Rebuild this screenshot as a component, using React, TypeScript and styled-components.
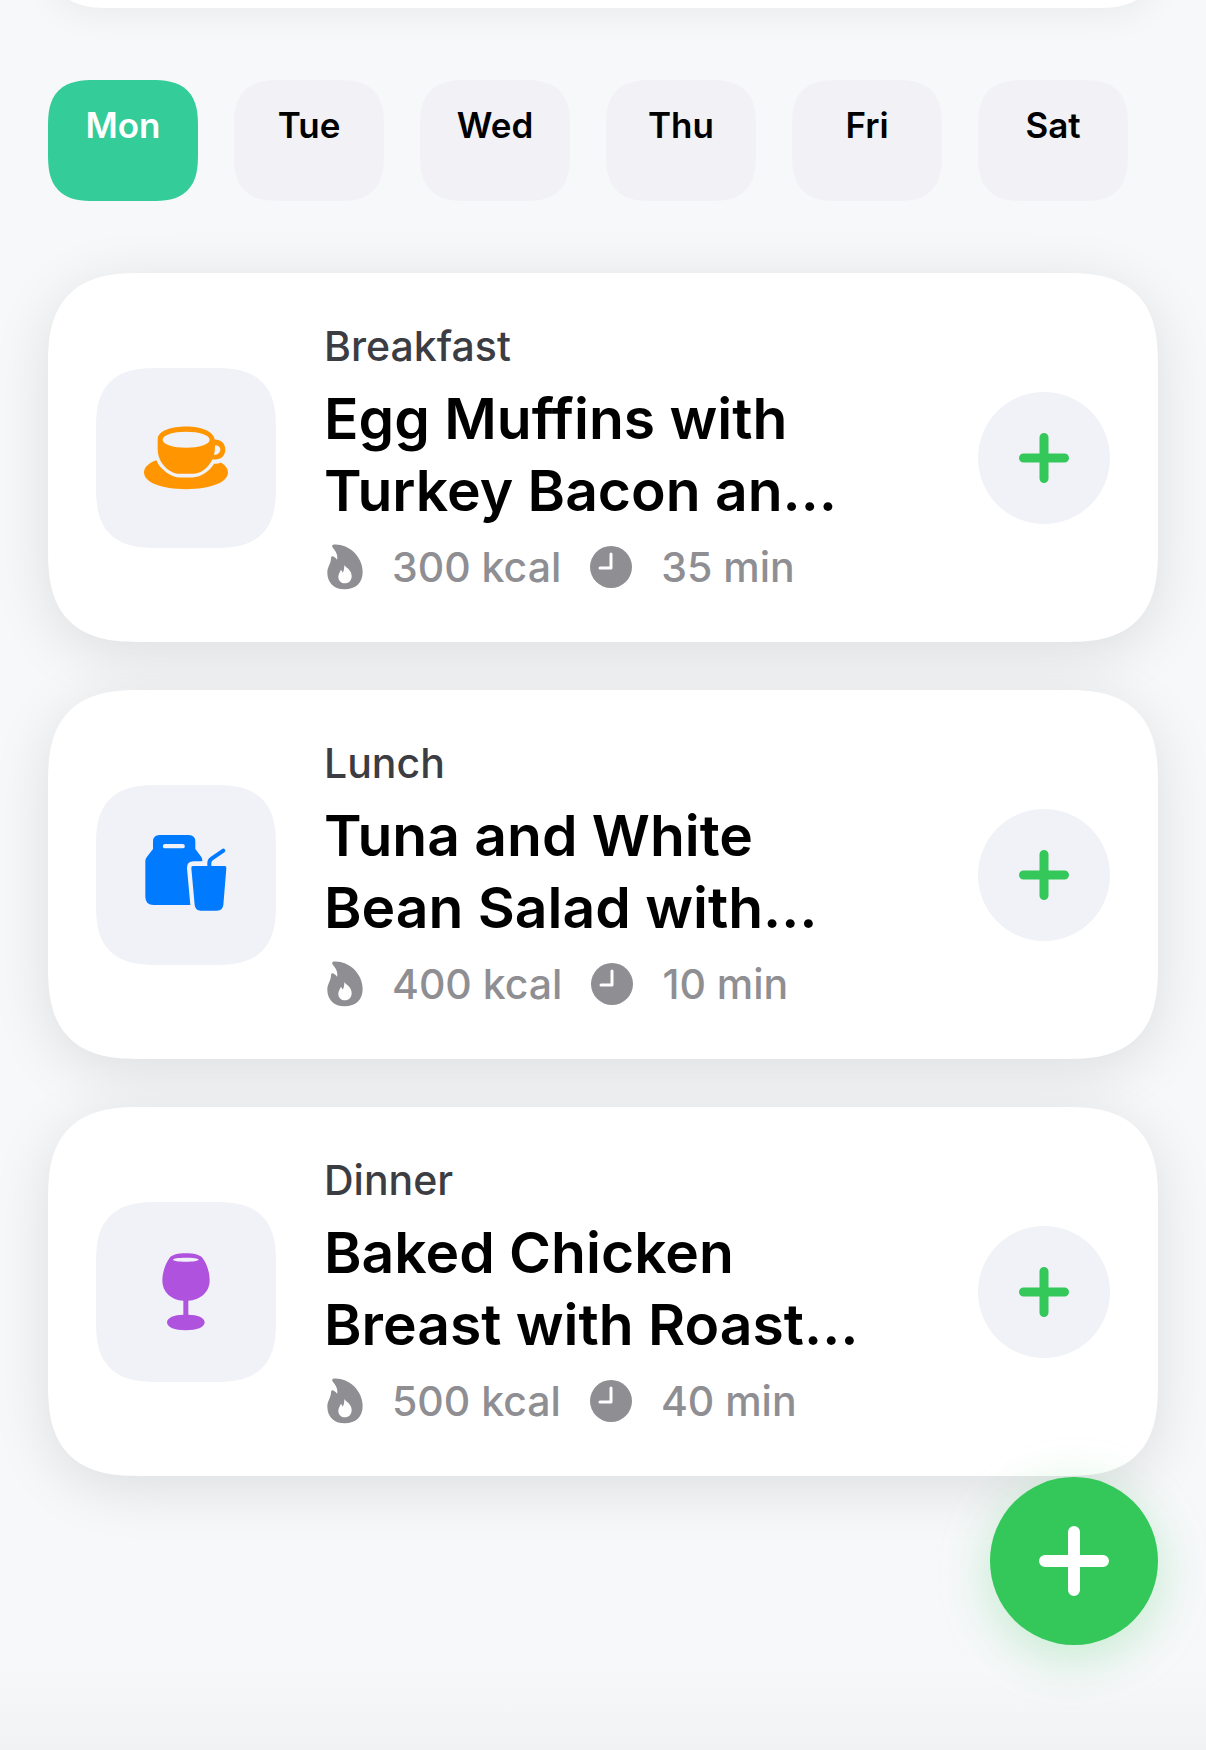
import React, { useState } from "react";
import styled, { createGlobalStyle, css } from "styled-components";

const GlobalStyle = createGlobalStyle`
  *, *::before, *::after { box-sizing: border-box; }
  body {
    margin: 0;
    background: #f7f8fa;
    font-family: Inter, "Liberation Sans", sans-serif;
    color: #000;
  }
  button { font: inherit; border: 0; padding: 0; cursor: pointer; }
  h2, p, ul { margin: 0; padding: 0; }
`;

/* Continuous corners where the browser has them, plain round ones elsewhere. */
const corners = (plain: number, smooth: number) => css`
  border-radius: ${plain}px;
  @supports (corner-shape: squircle) {
    border-radius: ${smooth}px;
    corner-shape: superellipse(1.44);
  }
`;

const Page = styled.main`
  min-height: 100vh;
  padding: 0 48px 240px;
  overflow: hidden;
  background: linear-gradient(to top, #f1f2f4, #f7f8fa 80px);
`;

const Summary = styled.section`
  height: 160px;
  margin-top: -152px;
  background: #fff;
  ${corners(48, 62)}
  box-shadow: 0 6px 36px rgba(0, 0, 0, 0.06);
`;

const Days = styled.nav`
  display: flex;
  gap: 36px;
  margin: 72px 0;
`;

const Day = styled.button<{ $active: boolean }>`
  display: flex;
  justify-content: center;
  align-items: flex-start;
  flex: 0 0 150px;
  height: 121px;
  padding: 24px 0;
  ${corners(36, 47)}
  background: ${(p) => (p.$active ? "#34cc99" : "#f2f1f6")};
  color: ${(p) => (p.$active ? "#fff" : "#000")};
  font-size: 35px;
  line-height: 43px;
  font-weight: 600;
`;

const Meals = styled.ul`
  display: flex;
  flex-direction: column;
  gap: 48px;
  list-style: none;
`;

const MealCard = styled.li`
  display: flex;
  align-items: center;
  gap: 48px;
  padding: 48px;
  background: #fff;
  ${corners(72, 94)}
  box-shadow: 0 12px 60px rgba(0, 0, 0, 0.11);
`;

const Tile = styled.div`
  display: grid;
  place-items: center;
  flex: 0 0 180px;
  height: 180px;
  background: #f1f2f7;
  ${corners(48, 62)}
`;

const Info = styled.div`
  display: flex;
  flex-direction: column;
  gap: 12px;
  flex: 1;
  min-width: 0;
  padding-right: 48px;
`;

const Kind = styled.p`
  font-size: 41px;
  line-height: 50px;
  font-weight: 500;
  color: #3c3c43;
`;

const Title = styled.h2`
  font-size: 57px;
  line-height: 72px;
  font-weight: 600;
`;

const Facts = styled.div`
  display: flex;
  align-items: center;
  gap: 26px;
  height: 55px;
  color: #8e8e93;
  font-size: 41px;
  line-height: 50px;
  font-weight: 500;
  white-space: nowrap;
`;

const AddButton = styled.button`
  display: grid;
  place-items: center;
  flex: 0 0 132px;
  height: 132px;
  border-radius: 50%;
  background: #f1f2f7;
  color: #34c759;
`;

const FloatingButton = styled.button`
  position: fixed;
  right: 48px;
  bottom: 105px;
  display: grid;
  place-items: center;
  width: 168px;
  height: 168px;
  border-radius: 50%;
  background: #34c759;
  color: #fff;
  box-shadow: 0 12px 52px rgba(52, 199, 89, 0.27);
`;

const Plus = ({ size, stroke }: { size: number; stroke: number }) => {
  const a = stroke / 2;
  const b = size - a;
  const m = size / 2;
  return (
    <svg width={size} height={size} viewBox={`0 0 ${size} ${size}`} aria-hidden="true">
      <path
        d={`M${m} ${a}V${b}M${a} ${m}H${b}`}
        stroke="currentColor"
        strokeWidth={stroke}
        strokeLinecap="round"
      />
    </svg>
  );
};

const CupIcon = () => (
  <svg width="84" height="64" viewBox="192 227 252 191" fill="#ff9500" aria-hidden="true">
    <path
      fillRule="evenodd"
      d="M233 266C233 241 274 228 319 228C360 228 400 240 404 267C424 267 436 280 436 297C436 315 424 327 405 327L397 327C384 354 360 370 340 370L298 370C268 370 233 338 233 295ZM248 268C248 282 279 292 318 292C358 292 389 282 389 268C389 254 358 244 318 244C279 244 248 254 248 268ZM405 284C405 296 404 304 402 313C414 313 421 306 421 297C421 289 415 284 405 284Z"
    />
    <path d="M229 329C240 357 275 381 300 381L337 381C365 381 390 360 402 340C410 340 417 339 422 336C436 344 444 354 444 366C444 396 390 416 318 416C246 416 192 396 192 366C192 350 206 337 229 329Z" />
  </svg>
);

const LunchIcon = () => (
  <svg width="82" height="80" viewBox="194 192 246 240" fill="#007aff" aria-hidden="true">
    <path
      fillRule="evenodd"
      d="M218 212Q218 192 238 192H325Q345 192 345 212V234L363 258Q367 264 366 271H340Q319 271 320 292L330 402H220Q195 402 195 377V270Q195 264 199 259L218 234ZM254 219A6.500 6.500 0 0 0 254 232H307A6.500 6.500 0 0 0 307 219Z"
    />
    <path d="M338 285H433Q439 285 438 292L429 402Q427 419 410 419H361Q345 419 343 402L333 292Q332 285 338 285Z" />
    <path d="M387 290V276Q387 268 394 263L429 239" fill="none" stroke="#007aff" strokeWidth="12" strokeLinecap="round" />
  </svg>
);

const GlassIcon = () => (
  <svg width="48" height="78" viewBox="245 185 144 234" fill="#af52de" aria-hidden="true">
    <path
      fillRule="evenodd"
      d="M268 199C276 190 292 186 316 186C341 186 357 190 366 199C381 219 388 245 388 268C388 301 360 326 324 328V370C352 370 373 379 373 393C373 408 350 417 316 417C283 417 260 408 260 393C260 379 282 370 309 370V328C272 326 246 301 246 268C246 245 254 219 268 199ZM278 205C278 208 295 211 316 211C338 211 355 208 355 205C355 201 338 199 316 199C295 199 278 201 278 205Z"
    />
  </svg>
);

const FlameIcon = () => (
  <svg width="42" height="46" viewBox="43 71 126 138" fill="currentColor" aria-hidden="true">
    <path
      fillRule="evenodd"
      d="M70 73C112 68 159 105 159 155C159 187 138 207 105 207C73 207 53 186 53 157C53 140 64 130 64 114C64 108 68 106 72 109Q79 112 82 118C86 105 78 92 70 83Q65 76 70 73ZM104 134C108 142 126 148 126 167C126 181 117 189 106 189C94 189 86 181 86 169C86 160 92 156 93 149Q97 149 99 157Q104 150 104 134Z"
    />
  </svg>
);

const ClockIcon = () => (
  <svg width="48" height="48" viewBox="0 0 48 48" aria-hidden="true">
    <circle cx="24" cy="24" r="21" fill="currentColor" />
    <path d="M24 11V25H13" fill="none" stroke="#fff" strokeWidth="3" strokeLinecap="round" strokeLinejoin="round" />
  </svg>
);

const days = ["Mon", "Tue", "Wed", "Thu", "Fri", "Sat"];

const meals = [
  { kind: "Breakfast", title: "Egg Muffins with Turkey Bacon an…", kcal: 300, minutes: 35, icon: <CupIcon /> },
  { kind: "Lunch", title: "Tuna and White Bean Salad with…", kcal: 400, minutes: 10, icon: <LunchIcon /> },
  { kind: "Dinner", title: "Baked Chicken Breast with Roast…", kcal: 500, minutes: 40, icon: <GlassIcon /> },
];

export default function App() {
  const [selected, setSelected] = useState("Mon");
  return (
    <>
      <GlobalStyle />
      <Page>
        <Summary />
        <Days>
          {days.map((day) => (
            <Day key={day} type="button" $active={day === selected} aria-pressed={day === selected} onClick={() => setSelected(day)}>
              {day}
            </Day>
          ))}
        </Days>
        <Meals>
          {meals.map((meal) => (
            <MealCard key={meal.kind}>
              <Tile>{meal.icon}</Tile>
              <Info>
                <Kind>{meal.kind}</Kind>
                <Title>{meal.title}</Title>
                <Facts>
                  <FlameIcon />
                  <span>{meal.kcal} kcal</span>
                  <ClockIcon />
                  <span>{meal.minutes} min</span>
                </Facts>
              </Info>
              <AddButton type="button" aria-label={`Add ${meal.kind}`}>
                <Plus size={50} stroke={9} />
              </AddButton>
            </MealCard>
          ))}
        </Meals>
        <FloatingButton type="button" aria-label="Add meal">
          <Plus size={70} stroke={12} />
        </FloatingButton>
      </Page>
    </>
  );
}
